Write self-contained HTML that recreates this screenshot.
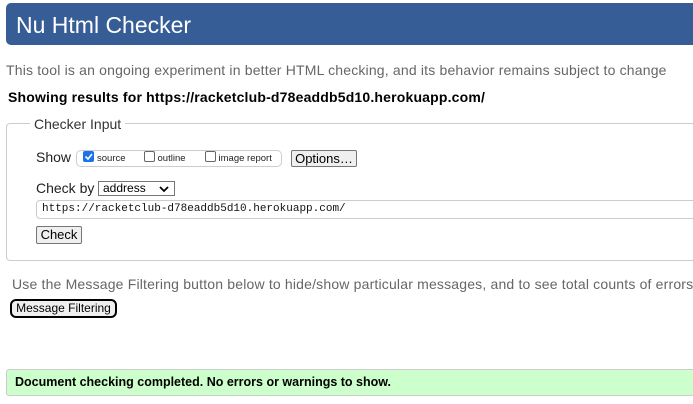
<!DOCTYPE html>
<html><head><style>
*{box-sizing:border-box}
body{margin:0;width:693px;height:404px;overflow:hidden;background:#fff;font-family:"Liberation Sans",Arial,sans-serif;position:relative}
#wrap{position:absolute;left:0;top:0;width:693px;height:404px;overflow:hidden}
.abs{position:absolute;white-space:nowrap}
#hdr{left:6px;top:3px;width:700px;height:42px;background:#365d95;border-radius:5px;color:#fff;font-size:23px;line-height:44px;padding-left:10px}
.grey{color:#666;font-size:14px;letter-spacing:0.18px}
#fs{left:6px;top:123px;width:700px;height:138px;border:1px solid #ccc;border-radius:4px}
#leg{left:30px;top:115px;background:#fff;padding:0 4px;font-size:14px;color:#333;line-height:18px}
.cb{display:inline-block;width:11px;height:11px;border:1px solid #666;border-radius:2px;vertical-align:-1px;margin-right:3px;background:#fff}
.cb.on{background:#1a73e8;border-color:#1a73e8;position:relative}
.btn{background:#efefef;border:1px solid #767676;border-radius:2px;font-size:13px;color:#000;text-align:center}
</style></head><body><div id="wrap">
<div class="abs" id="hdr">Nu Html Checker</div>
<div class="abs grey" style="left:6px;top:62px">This tool is an ongoing experiment in better HTML checking, and its behavior remains subject to change</div>
<div class="abs" style="left:8px;top:89px;font-size:14px;font-weight:bold;color:#000;letter-spacing:0.18px">Showing results for https://racketclub-d78eaddb5d10.herokuapp.com/</div>
<div class="abs" id="fs"></div>
<div class="abs" id="leg">Checker Input</div>
<div class="abs" style="left:36px;top:149px;font-size:14px;color:#222">Show</div>
<div class="abs" style="left:76px;top:150px;width:206px;height:17px;border:1px solid #ccc;border-radius:5px;font-size:9.5px;color:#222;line-height:15px;padding-left:6px">
<span class="cb on"><svg width="11" height="11" style="position:absolute;left:-1px;top:-1px"><path d="M2.5 5.5l2.5 2.5 4-5" stroke="#fff" stroke-width="1.6" fill="none"/></svg></span>source<span style="display:inline-block;width:18px"></span><span class="cb"></span>outline<span style="display:inline-block;width:19px"></span><span class="cb"></span>image report</div>
<div class="abs btn" style="left:291px;top:150px;width:66px;height:17px;line-height:15px;font-size:13px">Options…</div>
<div class="abs" style="left:36px;top:180px;font-size:14px;color:#222">Check by</div>
<div class="abs" style="left:98px;top:181px;width:77px;height:15px;border:1px solid #767676;font-size:12px;line-height:13px;padding-left:4px">address<svg width="10" height="7" style="position:absolute;right:5px;top:4px"><path d="M1 1l4 4 4-4" stroke="#000" stroke-width="1.8" fill="none"/></svg></div>
<div class="abs" style="left:36px;top:200px;width:670px;height:19px;border:1px solid #ccc;border-radius:4px;font-family:'Liberation Mono',monospace;font-size:11px;line-height:17px;padding-left:5px;color:#111">https://racketclub-d78eaddb5d10.herokuapp.com/</div>
<div class="abs btn" style="left:36px;top:226px;width:46px;height:18px;line-height:16px;font-size:13px">Check</div>
<div class="abs grey" style="left:12px;top:276px">Use the Message Filtering button below to hide/show particular messages, and to see total counts of errors and warnings.</div>
<div class="abs" style="left:10px;top:299px;width:107px;height:19px;border:2px solid #000;border-radius:6px;background:#efefef;font-size:12px;line-height:15px;text-align:center">Message Filtering</div>
<div class="abs" style="left:6px;top:369px;width:700px;height:27px;background:#ccffcc;border:1px solid #ccc;border-radius:3px;font-size:12.5px;font-weight:bold;line-height:25px;padding-left:8px">Document checking completed. No errors or warnings to show.</div>
</div></body></html>
